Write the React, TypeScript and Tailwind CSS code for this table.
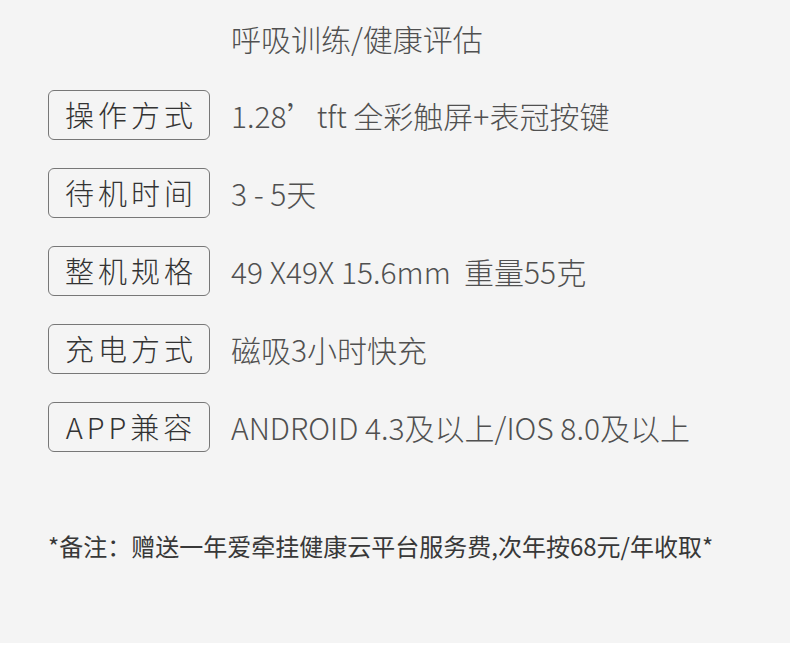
const specs = [
  { label: "操作方式", value: "1.28’tft 全彩触屏+表冠按键" },
  { label: "待机时间", value: "3 - 5天" },
  { label: "整机规格", value: "49 X49X 15.6mm\u00a0\u00a0重量55克" },
  { label: "充电方式", value: "磁吸3小时快充" },
  { label: "APP兼容", value: "ANDROID 4.3及以上/IOS 8.0及以上" },
];

const light = "font-['Noto_Sans_CJK_SC_Light','Noto_Sans_CJK_SC_DemiLight','Noto_Sans_CJK_SC',sans-serif] font-light";

export default function App() {
  return (
    <div className="w-full bg-white font-['Noto_Sans_CJK_SC','Noto_Sans',sans-serif]">
      <div className="h-[643px] bg-[#f4f4f4] pt-[1px] pl-[48px]">
        <div className="flex h-[75px] items-center">
          <div className="w-[162px] shrink-0" />
          <p className={`ml-[21px] text-[30px] text-[#505050] ${light}`}>呼吸训练/健康评估</p>
        </div>

        {specs.map((s) => (
          <div key={s.label} className="flex h-[78px] items-center">
            <div
              className={`flex h-[50px] w-[162px] shrink-0 items-center justify-center rounded-[6px] border border-[#777] pl-[4px] text-[29px] tracking-[4px] text-[#333] ${light}`}
            >
              {s.label}
            </div>
            <p className={`ml-[21px] whitespace-nowrap text-[30px] text-[#505050] ${light}`}>{s.value}</p>
          </div>
        ))}

        <p className="mt-[63px] h-[34px] text-[24px] leading-[34px] text-[#383838]">
          *备注：赠送一年爱牵挂健康云平台服务费,次年按68元/年收取*
        </p>
      </div>
      <div className="h-[18px] bg-white" />
    </div>
  );
}
